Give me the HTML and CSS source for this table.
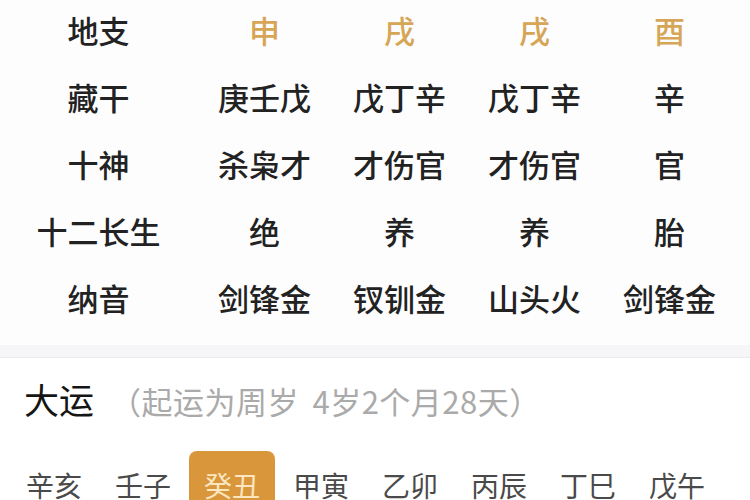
FILE: index.html
```html
<!DOCTYPE html>
<html lang="zh-CN">
<head>
<meta charset="utf-8">
<link rel="stylesheet" href="styles.css">
</head>
<body>
<div class="bazi">
  <div class="cell label">地支</div>
  <div class="cell gold">申</div>
  <div class="cell gold">戌</div>
  <div class="cell gold">戌</div>
  <div class="cell gold">酉</div>

  <div class="cell label">藏干</div>
  <div class="cell">庚壬戊</div>
  <div class="cell">戊丁辛</div>
  <div class="cell">戊丁辛</div>
  <div class="cell">辛</div>

  <div class="cell label">十神</div>
  <div class="cell">杀枭才</div>
  <div class="cell">才伤官</div>
  <div class="cell">才伤官</div>
  <div class="cell">官</div>

  <div class="cell label">十二长生</div>
  <div class="cell">绝</div>
  <div class="cell">养</div>
  <div class="cell">养</div>
  <div class="cell">胎</div>

  <div class="cell label">纳音</div>
  <div class="cell">剑锋金</div>
  <div class="cell">钗钏金</div>
  <div class="cell">山头火</div>
  <div class="cell">剑锋金</div>
</div>
<div class="divider"></div>
<section class="dayun">
  <div class="dayun-head">
    <span class="dayun-title">大运</span>
    <span class="dayun-note">（起运为周岁 4岁2个月28天）</span>
  </div>
  <div class="dayun-list">
    <span class="yun">辛亥</span>
    <span class="yun">壬子</span>
    <span class="yun active">癸丑</span>
    <span class="yun">甲寅</span>
    <span class="yun">乙卯</span>
    <span class="yun">丙辰</span>
    <span class="yun">丁巳</span>
    <span class="yun">戊午</span>
  </div>
</section>
</body>
</html>
```

FILE: styles.css
```css
html, body {
  margin: 0;
  padding: 0;
  background: #ffffff;
  overflow: hidden;
  width: 750px;
  height: 500px;
  font-family: "Noto Sans CJK SC", "Noto Sans", sans-serif;
}

.bazi {
  display: grid;
  grid-template-columns: 197px repeat(4, 135px);
  grid-auto-rows: 67px;
  margin-top: -4px;
  padding-bottom: 14px;
  background: #fdfdfe;
}

.cell {
  display: flex;
  align-items: center;
  justify-content: center;
  font-size: 31px;
  font-weight: 500;
  color: #222222;
  white-space: nowrap;
}

.cell.gold {
  color: #d6a555;
  font-weight: 500;
}

.divider {
  height: 12px;
  background: #f6f6f8;
  border-bottom: 1px solid #ececef;
}

.dayun {
  background: #ffffff;
  padding-top: 18px;
}

.dayun-head {
  display: flex;
  align-items: baseline;
  padding-left: 24px;
  height: 46px;
  line-height: 46px;
}

.dayun-title {
  font-size: 35px;
  font-weight: 400;
  color: #151515;
}

.dayun-note {
  font-size: 31px;
  color: #aaaaaa;
  margin-left: 16px;
  word-spacing: 6px;
  letter-spacing: 0.5px;
}

.dayun-list {
  display: flex;
  gap: 3px;
  padding-left: 11px;
  margin-top: 29px;
}

.yun {
  display: block;
  padding: 0 15px;
  height: 68px;
  line-height: 68px;
  font-size: 28px;
  color: #4a4a4a;
  border-radius: 8px;
  white-space: nowrap;
}

.yun.active {
  background: #d9963b;
  color: #fbe6c0;
}
```
